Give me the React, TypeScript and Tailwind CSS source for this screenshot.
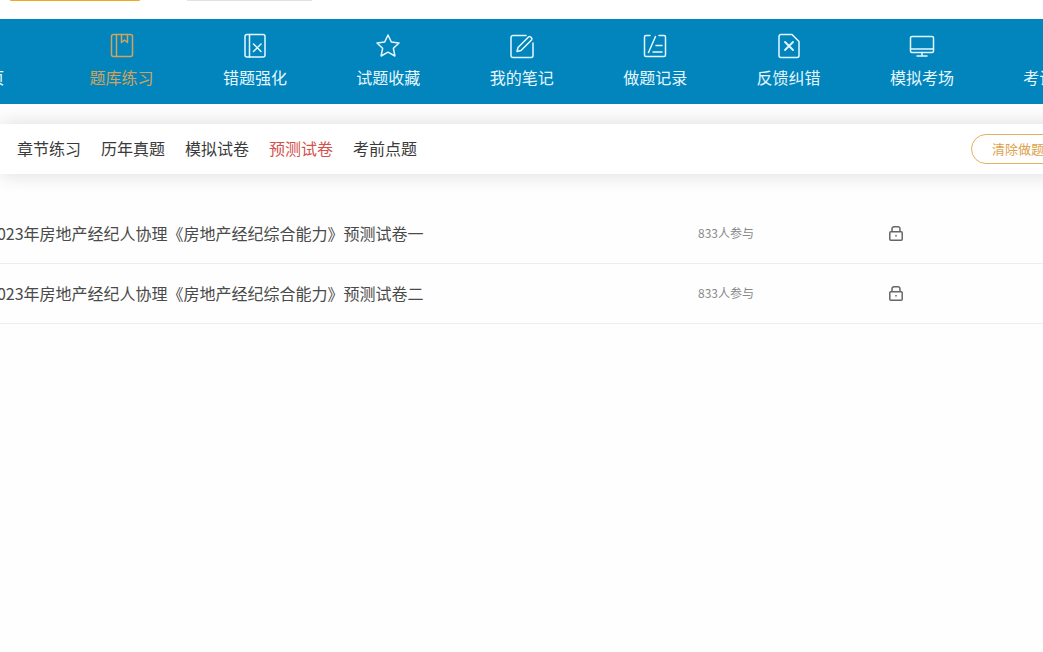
import type { ReactNode } from "react";

const font = { fontFamily: '"Microsoft YaHei", "Noto Sans CJK SC", "Noto Sans", sans-serif' };

function Icon({ children }: { children?: ReactNode }) {
  return (
    <svg width="26" height="26" viewBox="0 0 26 26" fill="none" stroke="currentColor" strokeWidth="1.5" strokeLinejoin="round" strokeLinecap="round">
      {children}
    </svg>
  );
}

const navItems: { label: string; active?: boolean; icon?: ReactNode }[] = [
  { label: "首页" },
  {
    label: "题库练习",
    active: true,
    icon: (
      <>
        <rect x="2.5" y="1.5" width="21" height="22" rx="2" />
        <path d="M7.5 1.5v22M12.5 1.5v8l3-2.500 3 2.500v-8" />
      </>
    ),
  },
  {
    label: "错题强化",
    icon: (
      <>
        <rect x="3" y="1.500" width="20" height="22.500" rx="2" />
        <path d="M7.500 1.500v22.500M11.500 11l7.500 7.500M19 11l-7.500 7.500" />
      </>
    ),
  },
  {
    label: "试题收藏",
    icon: <path d="M13 2l3.300 7 7.700 1-5.600 5.300 1.500 7.700-6.900-3.800-6.900 3.800 1.500-7.700L2 10l7.700-1z" />,
  },
  {
    label: "我的笔记",
    icon: (
      <>
        <path d="M17 2.500H4a2 2 0 0 0-2 2v18a2 2 0 0 0 2 2h18a2 2 0 0 0 2-2V10" />
        <path d="M9 14.500L19.500 4a1.500 1.500 0 0 1 2.100 0l.9.900a1.500 1.500 0 0 1 0 2.100L12 17.500l-4 1z" />
      </>
    ),
  },
  {
    label: "做题记录",
    icon: (
      <>
        <path d="M8 2.500H4A1.500 1.500 0 0 0 2.500 4v18A1.500 1.500 0 0 0 4 23.500h18a1.500 1.500 0 0 0 1.500-1.500V4A1.500 1.500 0 0 0 22 2.500h-5" />
        <path d="M6.500 19.500L13.500 3.500M14 12.500h6M11 19h9" />
      </>
    ),
  },
  {
    label: "反馈纠错",
    icon: (
      <>
        <path d="M5 1.500h11l7 7v14a2 2 0 0 1-2 2H5a2 2 0 0 1-2-2v-19a2 2 0 0 1 2-2z" />
        <path d="M9 9l8 8M17 9l-8 8" strokeWidth="1.800" />
      </>
    ),
  },
  {
    label: "模拟考场",
    icon: (
      <>
        <rect x="1.500" y="3.500" width="23" height="16" rx="1.500" />
        <path d="M1.500 16h23M13 19.500v3.500M8 23h10" />
      </>
    ),
  },
  { label: "考试中心" },
];

const tabs = ["章节练习", "历年真题", "模拟试卷", "预测试卷", "考前点题"];
const papers = ["2023年房地产经纪人协理《房地产经纪综合能力》预测试卷一", "2023年房地产经纪人协理《房地产经纪综合能力》预测试卷二"];

export default function App() {
  return (
    <div className="h-[652px] w-[1043px] overflow-hidden bg-[#fdfefd]" style={font}>
      <div className="flex h-[19px] items-start bg-white">
        <div className="ml-[10px] h-px w-[130px] rounded-b bg-[#f0a820]" />
        <div className="ml-[47px] h-px w-[125px] bg-[#e2e2e2]" />
      </div>

      <nav className="-ml-[78.500px] flex h-[85px] w-[1300px] bg-[#0285bc]">
        {navItems.map((item) => (
          <div key={item.label} className={`flex w-[133.400px] flex-col items-center pt-[14px] ${item.active ? "text-[#cfa45c]" : "text-[#e6f8ff]"}`}>
            <div className="h-[26px]">{item.icon ? <Icon>{item.icon}</Icon> : null}</div>
            <span className="mt-[6px] text-base leading-[24px]">{item.label}</span>
          </div>
        ))}
      </nav>

      <div className="mt-5 flex h-[50px] w-[1200px] items-center bg-white pl-[17px] shadow-[0_0_20px_rgba(0,0,0,0.14)]">
        {tabs.map((tab) => (
          <span key={tab} className={`mr-5 pb-[2px] text-base leading-[24px] ${tab === "预测试卷" ? "text-[#d2524e]" : "text-[#3a3a3a]"}`}>
            {tab}
          </span>
        ))}
        <button className="ml-[534px] h-[30px] w-[124px] shrink-0 rounded-full border border-[#e3b061] bg-white pl-5 text-left text-[13px] text-[#dca24e]">
          清除做题记录
        </button>
      </div>

      <ul className="-ml-3 mt-[30px] w-[1200px]">
        {papers.map((paper) => (
          <li key={paper} className="flex h-[60px] items-center border-b border-[#eeeeee]">
            <span className="w-[710px] pb-px text-base leading-[22px] text-[#4a4a4a]">{paper}</span>
            <span className="w-[191px] pb-px text-xs text-[#888888]">833人参与</span>
            <svg className="mb-px" width="14" height="15" viewBox="0 0 14 15" fill="none" stroke="#666666" strokeWidth="1.500">
              <rect x="0.800" y="5.800" width="12.400" height="8.400" rx="1" />
              <path d="M3 5.800V2.800A2 2 0 0 1 5 0.800h4a2 2 0 0 1 2 2v3" />
              <path d="M7 9v1.500" />
            </svg>
          </li>
        ))}
      </ul>
    </div>
  );
}
